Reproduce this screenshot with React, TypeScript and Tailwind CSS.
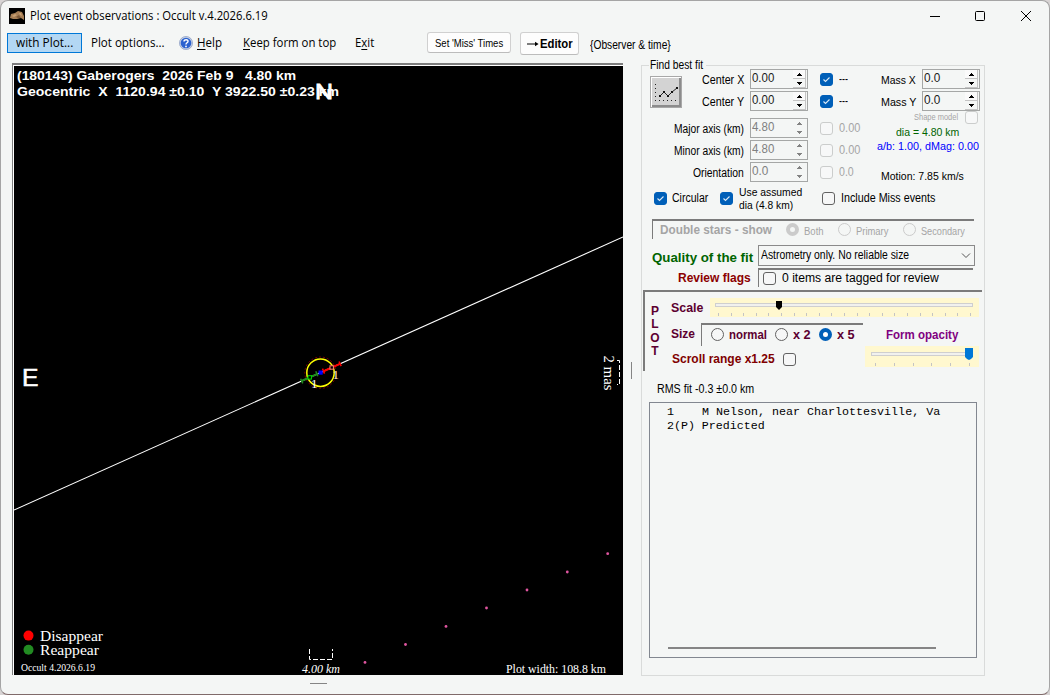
import { useLayoutEffect, useRef, type ReactNode } from 'react';
import clsx from 'clsx';

/** Single-line label whose glyphs are scaled horizontally to the width given in its classes. */
function Label({ text, className, children }: { text: string; className?: string; children?: ReactNode }) {
  const box = useRef<HTMLSpanElement>(null);
  const inner = useRef<HTMLSpanElement>(null);
  useLayoutEffect(() => {
    if (!box.current || !inner.current) return;
    const natural = inner.current.offsetWidth;
    if (natural > 0) inner.current.style.transform = `scaleX(${box.current.offsetWidth / natural})`;
  }, [text]);
  return (
    <span ref={box} className={clsx('block shrink-0 whitespace-pre', className)}>
      <span ref={inner} className="inline-block origin-left align-top">
        {children ?? text}
      </span>
    </span>
  );
}

function Check({ checked, disabled, className }: { checked?: boolean; disabled?: boolean; className?: string }) {
  return (
    <span
      className={clsx(
        'flex size-[13px] shrink-0 items-center justify-center rounded-[3px] border',
        checked ? 'border-[#005fb8] bg-[#005fb8]' : disabled ? 'border-[#cbcdcc] bg-[#f7f8f8]' : 'border-[#626262] bg-[#f6f7f7]',
        className,
      )}
    >
      {checked && (
        <svg viewBox="0 0 11 11" className="size-[11px]" fill="none" stroke="#d9e8f5" strokeWidth="1.1">
          <path d="M2.5 5.5 4.5 7.5 8.5 3.5" />
        </svg>
      )}
    </span>
  );
}

function Radio({ checked, disabled, className }: { checked?: boolean; disabled?: boolean; className?: string }) {
  return (
    <span
      className={clsx(
        'size-[13px] shrink-0 rounded-full',
        checked
          ? disabled
            ? 'border-4 border-[#cbcbcb] bg-[#f4f6f5]'
            : 'border-4 border-[#005fb8] bg-white'
          : disabled
            ? 'border border-[#cbcbcb]'
            : 'border border-[#626262] bg-[#f6f7f7]',
        className,
      )}
    />
  );
}

function Spinner({ value, disabled, className }: { value: string; disabled?: boolean; className?: string }) {
  return (
    <div
      className={clsx(
        'flex h-5 w-[58px] shrink-0 justify-between border border-[#a5a7a6] pl-px',
        disabled ? 'text-[#808080]' : 'text-[#1c1c1c]',
        className,
      )}
    >
      <Label text={value} className={clsx('text-[12.5px] leading-[17px]', value.length > 3 ? 'w-[22px]' : 'w-4')} />
      <svg viewBox="0 0 14 18" className="h-[18px] w-[14px]" shapeRendering="crispEdges">
        {!disabled && (
          <>
            <path d="M0 0h12v8H0z" fill="#fafafa" />
            <path d="M0 8.5h13M0 17.5h13M12.5 0v17" stroke="#c4c4c4" fill="none" />
          </>
        )}
        <path d="M6 3h1v1h1v1h1v1H4V5h1V4h1zM4 12h5v1H8v1H7v1H6v-1H5v-1H4z" fill={disabled ? '#838383' : '#000'} />
      </svg>
    </div>
  );
}

function AxisRow({ label, labelClass, value, checked, disabled, note, noteClass, className }: {
  label: string; labelClass: string; value: string; checked?: boolean; disabled?: boolean;
  note: string; noteClass: string; className?: string;
}) {
  return (
    <div className={clsx('flex h-5 items-center', className)}>
      <div className="flex w-[62px] justify-end pt-0.5">
        <Label text={label} className={labelClass} />
      </div>
      <Spinner value={value} disabled={disabled} className="ml-1.5" />
      <Check checked={checked} disabled={disabled} className="ml-3" />
      <Label text={note} className={clsx('ml-1.5', disabled && 'text-[#a5a5a5]', noteClass)} />
    </div>
  );
}

function Slider({ ticks, first, step, thumb, blue, className }: {
  ticks: number; first: number; step: number; thumb: number; blue?: boolean; className?: string;
}) {
  const width = blue ? 114 : 269;
  const bottom = blue ? 20 : 18;
  return (
    <div className={clsx('shrink-0 bg-[#fff8cf]', className)}>
      <svg width={width} height={bottom + 1} shapeRendering="crispEdges">
        <rect x={blue ? 6.5 : 5.5} y={blue ? 6.5 : 5.5} width={blue ? 98 : 257} height="3" fill="#f1f1ee" stroke="#cfcfcf" />
        {Array.from({ length: ticks }, (_, i) => (
          <rect key={i} x={Math.round(first + i * step)} y={bottom - 3} width="1" height="3" fill="#c4c4c4" />
        ))}
        {blue ? (
          <path d={`M${thumb} 2h8v9l-2 2-2 1-2-1-2-2z`} fill="#0078d7" shapeRendering="auto" />
        ) : (
          <path d={`M${thumb} 3h6v6l-3 3-3-3z`} fill="#000" shapeRendering="auto" />
        )}
      </svg>
    </div>
  );
}

const PREDICTED: [number, number][] = [
  [365, 662.4], [405.5, 644.5], [446, 626.4], [486.5, 608], [527, 590], [567.3, 572], [607.7, 553.7],
];

function Plot() {
  return (
    <div className="h-[612px] w-[611px] border-t-2 border-l border-[#7d7d7d]">
      <div className="h-[610px] w-[610px] border-t border-l border-white bg-black">
        <svg viewBox="14 66 609 609" className="block size-[609px]" fill="#fff">
          <line x1="14" y1="510" x2="623" y2="237" stroke="#fff" strokeWidth="1.1" />
          <circle cx="320.5" cy="372.7" r="15.7" fill="none" stroke="#a00000" strokeDasharray="2 2" strokeWidth="0.8" />
          <circle cx="320.5" cy="372.7" r="13.7" fill="none" stroke="#ffff00" strokeWidth="1.5" />
          <g fill="none">
            <path d="M301.5 381 318 373.6" stroke="#1f8a1f" strokeWidth="2" />
            <path d="M300.6 378.8l2.2 4.6M315.8 371.2l2 5" stroke="#1f8a1f" strokeWidth="1.5" />
            <path d="M323 371.5 340.5 363.6" stroke="#ff0000" strokeWidth="2" />
            <path d="M339 361.5l2.2 4.6M322.5 368.6l2 5" stroke="#ff0000" strokeWidth="1.5" />
            <rect x="308" y="375.7" width="3.4" height="3.4" stroke="#00e000" fill="#000" />
            <rect x="330" y="365.8" width="3.4" height="3.4" stroke="#ff8070" fill="#000" />
            <rect x="318.5" y="370.5" width="4.2" height="4.2" fill="#0000ff" />
          </g>
          <g fontFamily="Liberation Serif, serif">
            <text x="311" y="388" fontSize="13">1</text>
            <text x="332.5" y="379" fontSize="13" fill="#ffe8c8">1</text>
            <text x="40" y="641" fontSize="14.5" textLength="63" lengthAdjust="spacingAndGlyphs">Disappear</text>
            <text x="40" y="655" fontSize="14.5" textLength="59" lengthAdjust="spacingAndGlyphs">Reappear</text>
            <text x="21" y="671" fontSize="10" textLength="74" lengthAdjust="spacingAndGlyphs">Occult 4.2026.6.19</text>
            <text x="302" y="673" fontSize="12.5" fontStyle="italic" textLength="38" lengthAdjust="spacingAndGlyphs">4.00 km</text>
            <text x="506" y="673" fontSize="12" textLength="100" lengthAdjust="spacingAndGlyphs">Plot width: 108.8 km</text>
            <text transform="translate(604 355.5) rotate(90)" fontSize="14.5" textLength="35" lengthAdjust="spacingAndGlyphs">2 mas</text>
          </g>
          <g fontFamily="Liberation Sans, sans-serif">
            <text xmlSpace="preserve" x="17" y="80" fontSize="13" fontWeight="bold" textLength="279" lengthAdjust="spacingAndGlyphs">(180143) Gaberogers  2026 Feb 9   4.80 km</text>
            <text xmlSpace="preserve" x="17" y="96" fontSize="13" fontWeight="bold" textLength="322" lengthAdjust="spacingAndGlyphs">Geocentric  X  1120.94 ±0.10  Y 3922.50 ±0.23 km</text>
            <text x="315" y="99" fontSize="21.5" stroke="#fff" strokeWidth="0.8" textLength="18" lengthAdjust="spacingAndGlyphs">N</text>
            <text x="22" y="386" fontSize="23" stroke="#fff" strokeWidth="0.5" textLength="16.5" lengthAdjust="spacingAndGlyphs">E</text>
          </g>
          <circle cx="28.5" cy="635.6" r="5" fill="#ff0000" />
          <circle cx="28.5" cy="649.8" r="5" fill="#228b22" />
          <path d="M309.5 649v10.5h23V649" fill="none" stroke="#fff" strokeDasharray="5 2" />
          <path d="M617 360.5h2.5v24H617" fill="none" stroke="#fff" strokeDasharray="5 2" />
          {PREDICTED.map(([x, y]) => (
            <circle key={x} cx={x} cy={y} r="1.4" fill="#e055a0" />
          ))}
        </svg>
      </div>
    </div>
  );
}

function TitleBar() {
  return (
    <div className="flex h-[30px] items-center pl-2">
      <svg viewBox="0 0 16 16" className="-mt-px size-4">
        <rect width="16" height="16" fill="#000" />
        <path d="M1 10 2 6l4-1 3-2 4 1 2 4v4l-3-2-4 1-4 0z" fill="#a57e55" />
        <path d="M3 8 6 6l2 1-3 2zM10 5l2 0 1 3-2-1z" fill="#c9a173" />
        <path d="M7 9l3-2 2 3-3 0z" fill="#795737" />
      </svg>
      <Label text="Plot event observations : Occult v.4.2026.6.19" className="ml-[5px] w-[238px] font-['Open_Sans'] text-[12px] leading-4" />
      <svg viewBox="0 0 104 12" className="-mt-px ml-[661px] h-3 w-[104px]" fill="none" stroke="#000">
        <path d="M1 6.5h10" />
        <rect x="46.5" y="1.5" width="9" height="9" rx="1" />
        <path d="m92 1 10 10M102 1 92 11" />
      </svg>
    </div>
  );
}

function MenuBar() {
  return (
    <div className="flex h-[33px] items-start pl-1.5 pt-0.5 text-[12px] leading-[18px]">
      <div className="flex h-5 w-[75px] items-center border border-[#0078d7] bg-[#b3d7f3] pl-2 font-['Open_Sans']">
        <Label text="with Plot..." className="w-[57px]" />
      </div>
      <div className="flex h-5 items-center font-['Open_Sans']">
        <Label text="Plot options..." className="ml-[9px] w-[73px]" />
        <svg viewBox="0 0 14 14" className="ml-[15px] size-[14px]">
          <circle cx="7" cy="7" r="6.6" fill="#c3cee4" stroke="#7f93bd" strokeWidth="0.6" />
          <circle cx="7" cy="7" r="5.3" fill="#2b62cf" />
          <path d="M5 5.6C5 3 9.2 3.2 9 5.4 8.9 6.8 7 6.8 7 8.4" fill="none" stroke="#fff" strokeWidth="1.4" />
          <circle cx="7" cy="10.4" r="0.9" fill="#fff" />
        </svg>
        <Label text="Help" className="ml-1 w-[25px]"><u className="underline-offset-2">H</u>elp</Label>
        <Label text="Keep form on top" className="ml-[21px] w-[93px]"><u className="underline-offset-2">K</u>eep form on top</Label>
        <Label text="Exit" className="ml-[19px] w-[19px]">E<u className="underline-offset-2">x</u>it</Label>
      </div>
      <div className="-mt-px ml-[53px] flex h-[21px] w-[84px] items-center justify-center rounded-[3px] border border-[#d0d0d0] border-b-[#bcbcbc] bg-[#fdfdfd]">
        <Label text="Set 'Miss' Times" className="w-[68px] text-[10.5px]" />
      </div>
      <div className="-mt-px ml-[9px] flex h-[23px] w-[59px] items-center justify-center rounded-[3px] border border-[#d0d0d0] border-b-[#bcbcbc] bg-[#fdfdfd] font-bold">
        <svg viewBox="0 0 12 8" className="mt-px h-2 w-3" fill="none" stroke="#000" strokeWidth="1.2">
          <path d="M0 4h10" />
          <path d="M8 1.8 11.6 4 8 6.2z" fill="#000" stroke="none" />
        </svg>
        <Label text="Editor" className="ml-px w-[33px]" />
      </div>
      <Label text="{Observer & time}" className="ml-[11px] mt-[3px] w-[81px]" />
    </div>
  );
}

function FitSection() {
  return (
    <div className="flex h-[114px] pl-2">
      <div className="mt-[7px] size-8 shrink-0 border border-[#a8a8a8] bg-[#d3d3d3] shadow-[inset_1px_1px_0_#fff,inset_-2px_-2px_0_#8c8c8c]">
        <svg viewBox="0 0 30 30" className="size-[30px]" shapeRendering="crispEdges">
          <path d="M4.5 7v17" stroke="#222" strokeDasharray="1 3" />
          <path d="M4 23.5h22" stroke="#222" strokeDasharray="1 3" />
          <path d="m9 19 4-4 4 4 4-4 5-4" fill="none" stroke="#222" shapeRendering="auto" />
          <path d="M8 18h2v2H8zM12 14h2v2h-2zM16 18h2v2h-2zM20 14h2v2h-2zM25 10h2v2h-2z" fill="#111" />
        </svg>
      </div>
      <div className="w-[195px] shrink-0 text-[12px] leading-[14px]">
        <AxisRow label="Center X" labelClass="w-[42px]" value="0.00" checked note="---" noteClass="w-[9px]" />
        <AxisRow label="Center Y" labelClass="w-[42px]" value="0.00" checked note="---" noteClass="w-[9px]" className="mt-0.5" />
        <AxisRow label="Major axis (km)" labelClass="w-[70px]" value="4.80" disabled note="0.00" noteClass="w-[21px]" className="mt-[7px]" />
        <AxisRow label="Minor axis (km)" labelClass="w-[70px]" value="4.80" disabled note="0.00" noteClass="w-[21px]" className="mt-0.5" />
        <AxisRow label="Orientation" labelClass="w-[51px]" value="0.0" disabled note="0.0" noteClass="w-[15px]" className="mt-0.5" />
      </div>
      <div className="w-[104px] text-[11px] leading-[14px]">
        <div className="flex h-5 items-center pl-1">
          <Label text="Mass X" className="mt-0.5 w-[35px]" />
          <Spinner value="0.0" className="ml-1.5" />
        </div>
        <div className="mt-0.5 flex h-5 items-center pl-1">
          <Label text="Mass Y" className="mt-0.5 w-[35px]" />
          <Spinner value="0.0" className="ml-1.5" />
        </div>
        <div className="flex h-[14px] items-center pl-[37px]">
          <Label text="Shape model" className="-mt-0.5 w-[44px] text-[8.5px] leading-[10px] text-[#a5a5a5]" />
          <Check disabled className="-mt-px ml-[7px]" />
        </div>
        <Label text="dia = 4.80 km" className="ml-[19px] w-[63px] text-[#006400]" />
        <Label text="a/b: 1.00, dMag: 0.00" className="w-[102px] text-[#0000ff]" />
        <Label text="Motion: 7.85 km/s" className="ml-1 mt-[16px] w-[83px]" />
      </div>
    </div>
  );
}

function FitPanel() {
  return (
    <div className="flex h-[611px] w-[344px] flex-col border border-[#d9dbda]">
      <div className="-mt-2 ml-[7px] h-[11px] w-[57px] bg-[#f4f6f5] pl-px">
        <Label text="Find best fit" className="w-[53px] text-[12px] leading-[14px]" />
      </div>
      <FitSection />

      <div className="flex h-[31px] items-center pl-3 text-[12px] leading-[13px]">
        <Check checked />
        <Label text="Circular" className="ml-[5px] w-9" />
        <Check checked className="ml-3" />
        <div className="ml-1.5 w-[63px] text-[11px]">
          <Label text="Use assumed" className="w-[63px]" />
          <Label text="dia (4.8 km)" className="w-[54px]" />
        </div>
        <Check className="ml-5" />
        <Label text="Include Miss events" className="ml-1.5 w-[94px]" />
      </div>

      <div className="ml-[10px] mt-[5px] flex h-5 w-[322px] items-center border-l border-t-2 border-[#7b7b7b] pl-[7px] text-[10px] text-[#a5a5a5]">
        <Label text="Double stars - show" className="w-[112px] text-[12px] font-bold leading-4" />
        <Radio checked disabled className="-mt-px ml-[14px]" />
        <Label text="Both" className="ml-[5px] mt-0.5 w-5" />
        <Radio disabled className="-mt-px ml-[14px]" />
        <Label text="Primary" className="ml-[5px] mt-0.5 w-8" />
        <Radio disabled className="-mt-px ml-[15px]" />
        <Label text="Secondary" className="ml-[5px] mt-0.5 w-[44px]" />
      </div>

      <div className="mt-[6px] flex h-[21px] items-center pl-[10px] text-[12px] leading-4">
        <Label text="Quality of the fit" className="mt-1 w-[101px] text-[12.5px] font-bold text-[#006400]" />
        <div className="ml-[5px] flex h-[21px] w-[217px] items-center justify-between border border-[#8a8a8a] pl-0.5 pr-[3px]">
          <Label text="Astrometry only. No reliable size" className="-mt-px w-[148px]" />
          <svg viewBox="0 0 10 6" className="h-1.5 w-2.5" fill="none" stroke="#555">
            <path d="m1 .5 4 4 4-4" />
          </svg>
        </div>
      </div>

      <div className="mt-[2px] flex h-[19px] items-center pl-9 text-[12px] leading-4">
        <Label text="Review flags" className="w-[73px] font-bold text-[#8b0000]" />
        <div className="ml-[7px] flex h-[19px] w-[215px] items-center border-l border-t-2 border-[#7b7b7b] pl-1">
          <Check className="-mt-px" />
          <Label text="0 items are tagged for review" className="-mt-0.5 ml-1.5 w-[157px]" />
        </div>
      </div>

      <div className="ml-px mt-[3px] flex h-[81px] w-[339px] border-l-2 border-t-2 border-[#7b7b7b] text-[12px] font-bold leading-[13.3px] text-[#5c0030]">
        <div className="w-[20px] pt-[13px] text-center">
          <div>P</div>
          <div>L</div>
          <div>O</div>
          <div>T</div>
        </div>
        <div className="ml-1.5 flex flex-1 flex-col">
          <div className="flex h-[31px] items-start pt-1.5">
            <Label text="Scale" className="mt-1 w-8" />
            <Slider ticks={21} first={8} step={12.6} thumb={66} className="ml-[7px] h-[19px] w-[269px]" />
          </div>
          <div className="flex h-[23px] items-center">
            <Label text="Size" className="w-6" />
            <div className="ml-[6px] flex h-[23px] w-[162px] items-center border-l border-t-2 border-[#7b7b7b] pl-[9px]">
              <Radio className="-mt-0.5" />
              <Label text="normal" className="ml-[5px] w-[38px]" />
              <Radio className="-mt-0.5 ml-2" />
              <Label text="x 2" className="ml-[5px] w-[18px]" />
              <Radio checked className="-mt-0.5 ml-2" />
              <Label text="x 5" className="ml-[5px] w-[18px]" />
            </div>
            <Label text="Form opacity" className="ml-[23px] mt-0.5 w-[72px] text-[#800080]" />
          </div>
          <div className="flex h-[21px] items-start">
            <Label text="Scroll range x1.25" className="ml-px mt-[7px] w-[103px] text-[#800000]" />
            <Check className="ml-2 mt-[7px]" />
            <Slider blue ticks={6} first={10} step={18.8} thumb={100} className="ml-[69px] h-[21px] w-[114px]" />
          </div>
        </div>
      </div>

      <Label text="RMS fit -0.3 ±0.0 km" className="ml-[15px] mt-[11px] w-[97px] text-[12px] leading-[14px]" />

      <div className="ml-[7px] mt-[6px] flex h-[256px] w-[328px] flex-col border border-[#828790] pl-[17px] pt-[2px] font-['Liberation_Mono'] text-[11.5px] leading-[14px]">
        <Label text="1    M Nelson, near Charlottesville, Va" className="w-[273px]" />
        <Label text="2(P) Predicted" className="w-[98px]" />
        <div className="mb-[8px] ml-px mt-auto h-[2px] w-[268px] bg-[#858585]" />
      </div>
    </div>
  );
}

export default function App() {
  return (
    <div className="h-[695px] w-[1050px] overflow-hidden bg-[#d8d4d4]">
      <div className="h-[695px] w-[1050px] overflow-hidden rounded-lg border border-[#a5a5a5] border-b-[#806a6a] bg-[#f4f6f5] font-['Liberation_Sans'] text-black">
        <TitleBar />
        <MenuBar />
        <div className="flex items-start pl-[11px]">
          <div className="-mt-px">
            <Plot />
            <div className="ml-[298px] mt-2 h-px w-[17px] bg-[#858585]" />
          </div>
          <div className="ml-2 mt-[298px] h-[17px] w-px bg-[#858585]" />
          <div className="ml-[9px] mt-px">
            <FitPanel />
          </div>
        </div>
      </div>
    </div>
  );
}
